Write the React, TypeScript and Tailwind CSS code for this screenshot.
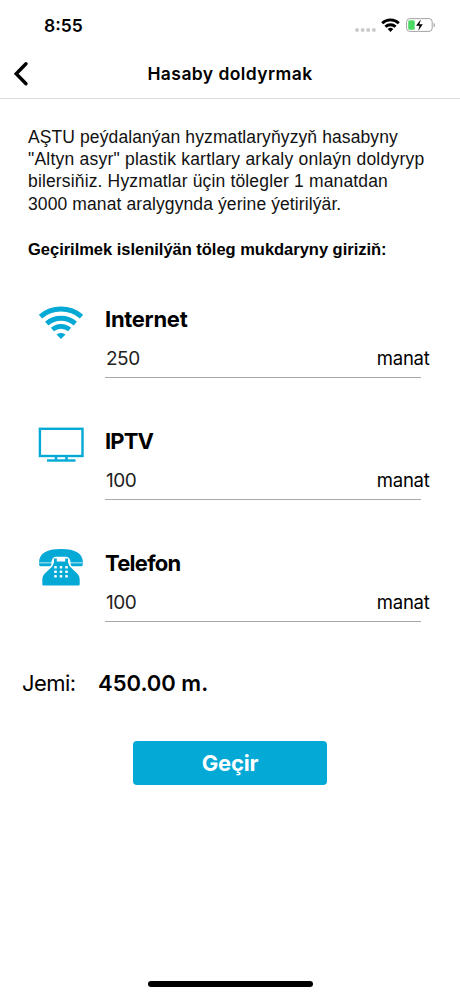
import type { ReactNode } from "react";

const sans = "font-['Inter','Liberation_Sans',sans-serif]";
const helv = "font-['Liberation_Sans',Arial,sans-serif]";

function StatusBar() {
  return (
    <div className="flex h-[50px] items-center justify-between pr-[24px] pl-[44px]">
      <span className="pt-px text-[17.5px] leading-none font-semibold">8:55</span>
      <div className="flex items-center">
        <svg className="mt-[9px] mr-[5px]" width="21" height="4" viewBox="0 0 21 4" fill="#c8c8ca">
          <rect x="0.3" y="0.2" width="3.5" height="3.5" rx="1" />
          <rect x="5.9" y="0.2" width="3.5" height="3.5" rx="1" />
          <rect x="11.5" y="0.2" width="3.5" height="3.5" rx="1" />
          <rect x="17.1" y="0.2" width="3.5" height="3.5" rx="1" />
        </svg>
        <svg className="mr-[6px]" width="19" height="14" viewBox="0 0 19 14" fill="none" stroke="#000" strokeWidth="2.9">
          <path d="M1.2 5.2a12 12 0 0 1 16.6 0" />
          <path d="M4.4 8.8a7.3 7.3 0 0 1 10.2 0" />
          <path d="M9.5 13.9 6.700 11.100a4 4 0 0 1 5.600 0z" fill="#000" stroke="none" />
        </svg>
        <svg width="30" height="14" viewBox="0 0 30 14" fill="none">
          <rect x="0.6" y="0.6" width="25.6" height="12.8" rx="3.2" stroke="#a3a3a5" />
          <path d="M27.6 4.7c1.8.6 1.8 4 0 4.6z" fill="#a3a3a5" />
          <rect x="2.2" y="2.2" width="6.6" height="9.6" rx="1.6" fill="#4cd964" />
          <path d="M15 1.2 10 7.8h3.5l-1.3 5.2L16.8 6.2h-3.5z" fill="#000" stroke="#fff" strokeWidth="2" paintOrder="stroke" />
        </svg>
      </div>
    </div>
  );
}

function Header() {
  return (
    <div className="relative flex h-[48.5px] items-center justify-center border-b border-[#dcdcde]">
      <svg className="absolute top-[11px] left-[13px]" width="16" height="26" viewBox="0 0 16 26" fill="none" stroke="#000" strokeWidth="3.4" strokeLinecap="round" strokeLinejoin="miter">
        <path d="M13 2.8 3.2 12.8l9.8 10" />
      </svg>
      <h1 className="text-[17.5px] leading-none font-semibold tracking-[0.42px]">Hasaby doldyrmak</h1>
    </div>
  );
}

function WifiIcon() {
  return (
    <svg className="mt-[2px]" width="46" height="34" viewBox="0 0 46 34" fill="none" stroke="#04a9d6" strokeWidth="5">
      <path d="M2.5 10.6C14 .6 32 .6 43.5 10.6" />
      <path d="M8.7 17.6c8-7.1 20.6-7.1 28.6 0" />
      <path d="M14.4 23.6c4.9-4.3 12.3-4.3 17.2 0" strokeWidth="4.6" />
      <path d="M23 33l-4.5-4.400c2.500-2.100 6.500-2.100 9 0z" fill="#04a9d6" stroke="none" />
    </svg>
  );
}

function TvIcon() {
  return (
    <svg className="mt-[1px]" width="46" height="36" viewBox="0 0 46 36" fill="none" stroke="#04a9d6">
      <rect x="1.9" y="1.8" width="42.6" height="27.2" strokeWidth="2.400" />
      <path d="M18 29v4.500M28.500 29v4.500" strokeWidth="2.500" />
      <path d="M9 33.500h28.500" strokeWidth="2.400" />
    </svg>
  );
}

function PhoneIcon() {
  return (
    <svg width="46" height="38" viewBox="0 0 46 38" fill="#04a9d6">
      <path d="M1 14.600C1.200 5.500 8 1 23 1s21.800 4.500 22 13.600H32.600c-.2-3.800-2-5.800-5.200-5.800h-8.800c-3.200 0-5 2-5.200 5.800z" />
      <path d="M1 15.300h12.400c0 1.800-.7 2.900-1.900 2.900H2.700C1.600 18.200 1 17.100 1 15.300zM32.600 15.300H45c0 1.800-.6 2.900-1.700 2.900h-8.800c-1.200 0-1.900-1.100-1.900-2.900z" />
      <path d="M16 10.600h2.800v3h8.400v-3H30v3c0 1.600.9 3.400 2.300 5.400l6.900 6.400c1.800 2 2.500 4 2.500 6.600v3.900c0 1.100-.6 1.600-1.600 1.600H5.900c-1 0-1.600-.5-1.600-1.600V32c0-2.600.7-4.600 2.500-6.600l6.900-6.400c1.400-2 2.300-3.800 2.300-5.400z" />
      <g fill="#fff">
        {[17.5, 23, 28.5].map((x) =>
          [19.3, 23.8, 28.3].map((y) => <rect key={`${x}-${y}`} x={x - 1.3} y={y - 1.3} width="2.6" height="2.6" rx="0.7" />),
        )}
      </g>
    </svg>
  );
}

function ServiceRow({ icon, name, amount, tracking }: { icon: ReactNode; name: string; amount: string; tracking: string }) {
  return (
    <div className="flex h-[122.2px] pl-[38px]">
      <div className="w-[67px] shrink-0">{icon}</div>
      <div className="w-[316px] shrink-0">
        <h2 className={`mt-px h-[28px] text-[22px] leading-[28px] font-bold ${tracking}`}>{name}</h2>
        <div className="mt-[11px] flex h-[34px] items-start justify-between border-b border-[#a9a9ab]">
          <span className="pl-px text-[19px] leading-[30px] tracking-[-0.5px] text-[#222]">{amount}</span>
          <span className="-mr-[8.5px] text-[18.5px] leading-[28px] tracking-[-0.25px]">manat</span>
        </div>
      </div>
    </div>
  );
}

export default function App() {
  return (
    <div className={`${sans} flex h-[996px] w-[460px] flex-col overflow-hidden bg-white text-black`}>
      <StatusBar />
      <Header />
      <div className={`${helv} mt-[27.5px] pl-[28px] text-[17.5px] leading-[22.2px] whitespace-nowrap text-[#111]`}>
        <p className="tracking-[0.1px]">AŞTU peýdalanýan hyzmatlaryňyzyň hasabyny</p>
        <p className="tracking-[0.22px]">"Altyn asyr" plastik kartlary arkaly onlaýn doldyryp</p>
        <p className="tracking-[0.15px]">bilersiňiz. Hyzmatlar üçin tölegler 1 manatdan</p>
        <p className="tracking-[0.1px]">3000 manat aralygynda ýerine ýetirilýär.</p>
        <p className="mt-[23px] text-[16.5px] font-bold tracking-[-0.02px] text-black">Geçirilmek islenilýän töleg mukdaryny giriziň:</p>
      </div>
      <div className="mt-[44px] h-[367px]">
        <ServiceRow icon={<WifiIcon />} name="Internet" amount="250" tracking="tracking-[-0.3px]" />
        <ServiceRow icon={<TvIcon />} name="IPTV" amount="100" tracking="tracking-[-0.9px]" />
        <ServiceRow icon={<PhoneIcon />} name="Telefon" amount="100" tracking="tracking-[-0.75px]" />
      </div>
      <div className="-mt-[2.5px] flex h-[30px] items-center pl-[22px] text-[22px]">
        <span className="w-[76px] tracking-[-0.55px]">Jemi:</span>
        <span className="font-semibold">450.00 m.</span>
      </div>
      <button className="mx-auto mt-[42px] flex h-[44px] w-[194px] shrink-0 items-center justify-center rounded-[4px] bg-[#04a9d6] pt-[2px] text-[22px] font-bold tracking-[-0.2px] text-white">
        Geçir
      </button>
      <div className="mx-auto mt-auto mb-[9px] h-[6px] w-[165px] rounded-full bg-black" />
    </div>
  );
}
